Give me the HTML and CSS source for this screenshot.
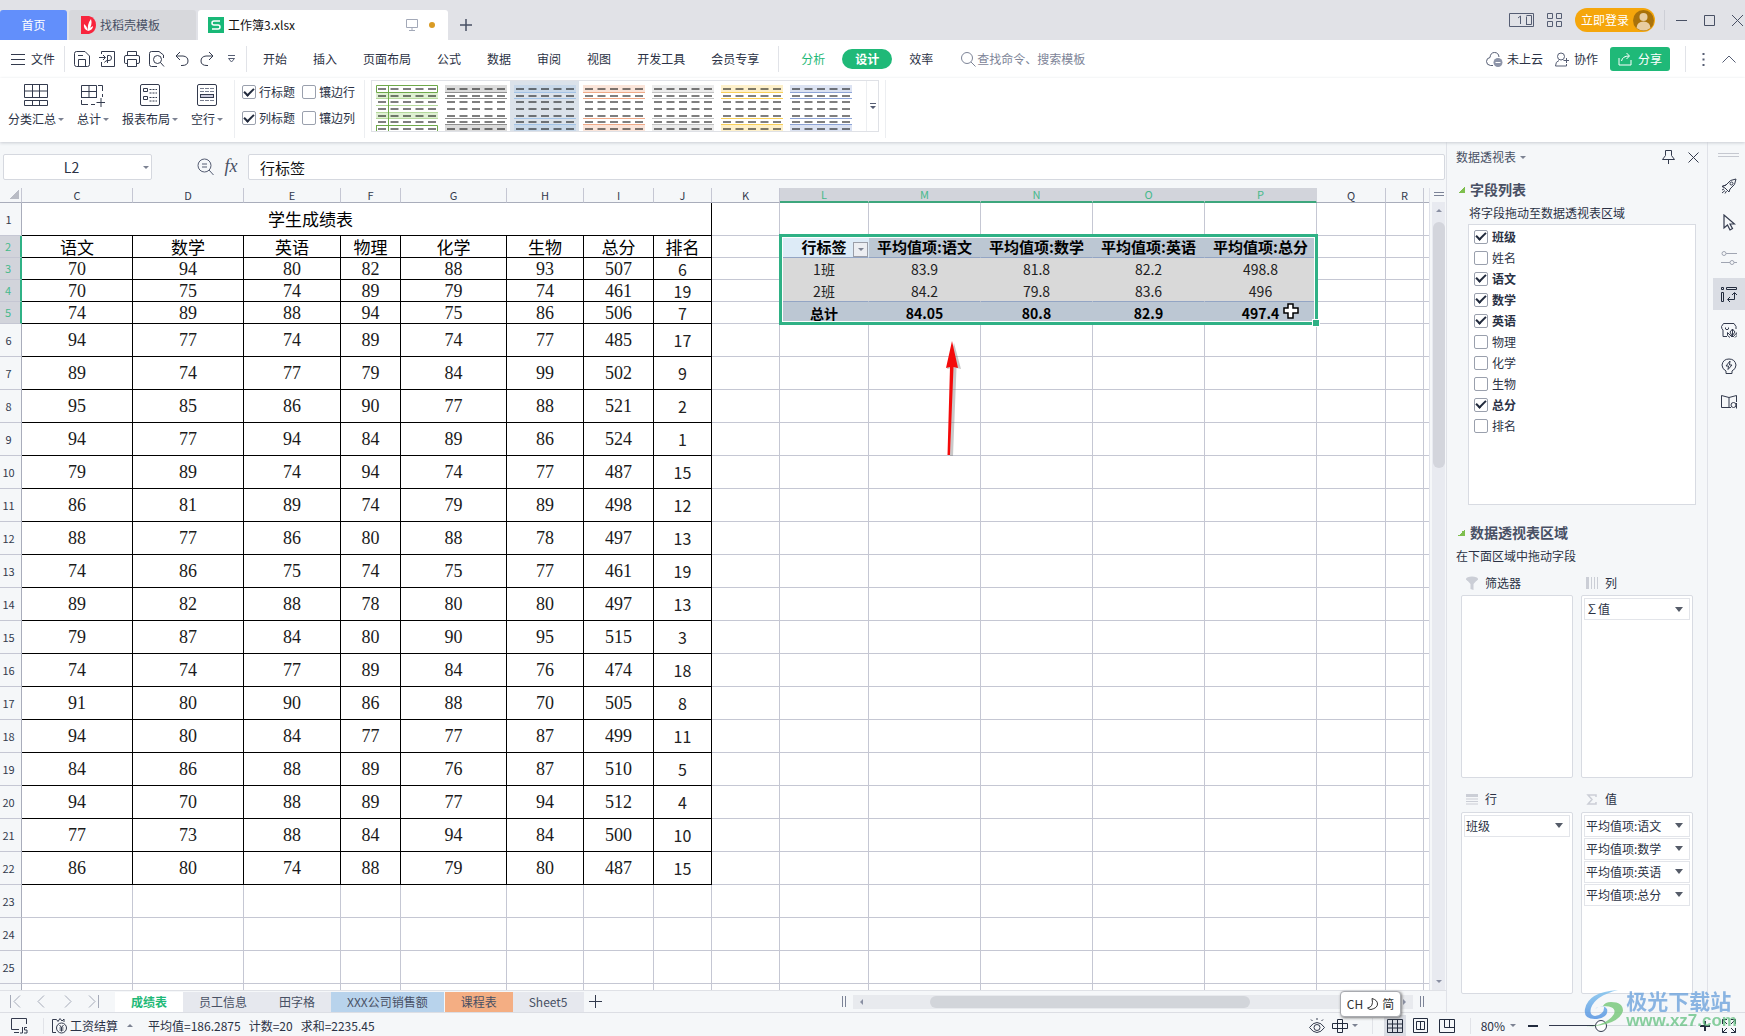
FILE: index.html
```html
<!DOCTYPE html>
<html lang="zh-CN">
<head>
<meta charset="utf-8">
<title>工作簿3.xlsx</title>
<link rel="stylesheet" href="styles.css">
</head>
<body>
<svg class="defs" aria-hidden="true">
  <symbol id="dashes" viewBox="0 0 62 46">
    <path d="M2 4H61M2 11H61M2 17H61M2 24H61M2 31H61M2 37H61M2 44H61" stroke="#000" stroke-width="1.200" stroke-dasharray="8 4.500" fill="none"/>
  </symbol>
  <symbol id="rules" viewBox="0 0 62 46">
    <path d="M0 7.500H62M0 13.500H62M0 33.500H62M0 39.500H62" fill="none" stroke="currentColor"/>
    <path d="M0 0H62V7H0zM0 40H62V46H0z" fill="currentColor" opacity=".32"/>
  </symbol>
</svg>

<header class="titlebar">
  <nav class="doc-tabs">
    <button class="doc-tab home">首页</button>
    <button class="doc-tab store"><svg width="15" height="18" viewBox="0 0 15 18"><path d="M0 0H8Q15 2 15 9T8 18H0z" fill="#f8253d"/><path d="M7 15Q2 13 3 8Q6 10 7 15Q6 8 10 3Q12 9 7 15Q9 11 12 10Q12 14 7 15" fill="#fff"/></svg>找稻壳模板</button>
    <button class="doc-tab current"><svg width="16" height="16" viewBox="0 0 16 16"><rect width="16" height="16" fill="#18b877"/><path d="M12 4H6Q4 4 4 6T6 8H10Q12 8 12 10T10 12H4" fill="none" stroke="#fff" stroke-width="1.500"/></svg><span class="doc-name">工作簿3.xlsx</span><svg width="12" height="12" viewBox="0 0 12 12" fill="none" stroke="#a3a9b8"><path d="M.5 .5H11.500V8.500H.5zM6 8.500V11M3 11.500H9"/></svg><i class="unsaved"></i></button>
    <button class="icon-btn new-tab" aria-label="新建"><svg width="12" height="12" viewBox="0 0 12 12" stroke="#485064" stroke-width="1.500"><path d="M6 0V12M0 6H12"/></svg></button>
  </nav>
  <div class="window-tools">
    <button class="icon-btn" aria-label="窗口"><svg width="25" height="14" viewBox="0 0 25 14" fill="none" stroke="#555d73"><path d="M.5 .5H24.500V13.500H.5zM9 5L11.500 3V11M17.500 3.500V11M17 11.500H22.500V2.500H17.500"/></svg></button>
    <button class="icon-btn" aria-label="应用"><svg width="15" height="14" viewBox="0 0 15 14" fill="none" stroke="#555d73"><path d="M.5 .5H5.500V5.500H.5zM9.500 .5H14.500V5.500H9.500zM.5 8.500H5.500V13.500H.5zM9.500 8.500H14.500V13.500H9.500z"/></svg></button>
    <button class="login">立即登录<svg width="21" height="21" viewBox="0 0 21 21"><circle cx="10.500" cy="10.500" r="10.500" fill="#a9720b"/><circle cx="10.500" cy="7" r="4" fill="#e8cda2"/><path d="M3.500 18Q4 11.500 10.500 11.500T17.500 18Q10.500 23 3.500 18" fill="#e8cda2"/></svg></button>
    <i class="sep"></i>
    <button class="icon-btn win" aria-label="最小化"><svg width="11" height="11" viewBox="0 0 11 11" fill="none" stroke="#485064"><path d="M0 5.500H11"/></svg></button>
    <button class="icon-btn win" aria-label="最大化"><svg width="11" height="11" viewBox="0 0 11 11" fill="none" stroke="#485064"><path d="M.5 .5H10.500V10.500H.5z"/></svg></button>
    <button class="icon-btn win" aria-label="关闭"><svg width="11" height="11" viewBox="0 0 11 11" fill="none" stroke="#485064"><path d="M0 0L11 11M11 0L0 11"/></svg></button>
  </div>
</header>

<div class="menubar">
  <button class="file-menu"><svg width="14" height="11" viewBox="0 0 14 11" stroke="#333a4d"><path d="M0 .5H14M0 5.500H14M0 10.500H14"/></svg>文件</button>
  <i class="sep"></i>
  <div class="quick">
    <button class="icon-btn" aria-label="保存"><svg width="16" height="16" viewBox="0 0 16 16" fill="none" stroke="#333a4d"><path d="M.5 2.500V13.500Q.5 15.500 2.500 15.500H13.500Q15.500 15.500 15.500 13.500V5L11 .5H2.500Q.5 .5 .5 2.500M4.500 15V8.500H11.500V15M4 4.500H9"/></svg></button>
    <button class="icon-btn" aria-label="输出为PDF"><svg width="16" height="16" viewBox="0 0 16 16" fill="none" stroke="#333a4d"><path d="M2.500 3V.5H15.500V15.500H2.500V11M0 6.500H6M4 4L6.500 6.500L4 9M8.500 12V4.500H10.500Q12.500 4.500 12.500 7T10 9.500H8.500Q6.500 9.500 5.500 11.500"/></svg></button>
    <button class="icon-btn" aria-label="打印"><svg width="16" height="16" viewBox="0 0 16 16" fill="none" stroke="#333a4d"><path d="M3.500 4V.5H12.500V4M3.500 12.500H1.500Q.5 12.500 .5 11V6Q.5 4.500 2 4.500H14Q15.500 4.500 15.500 6V11Q15.500 12.500 14 12.500H12.500M3.500 8.500H12.500V15.500H3.500z"/></svg></button>
    <button class="icon-btn" aria-label="打印预览"><svg width="16" height="16" viewBox="0 0 16 16" fill="none" stroke="#333a4d"><path d="M8 15.500H2.500Q.5 15.500 .5 13.500V2.500Q.5 .5 2.500 .5H10L14.500 4V7"/><circle cx="8.500" cy="8.500" r="4"/><path d="M11.500 11.500L15 15.500"/></svg></button>
    <button class="icon-btn" aria-label="撤销"><svg width="14" height="16" viewBox="0 0 14 16" fill="none" stroke="#333a4d"><path d="M5 1L1 5L5 9M1 5H8Q13 5.500 13 10T7 14.500H6"/></svg></button>
    <button class="icon-btn" aria-label="恢复"><svg width="14" height="16" viewBox="0 0 14 16" fill="none" stroke="#333a4d"><path d="M9 1L13 5L9 9M13 5H6Q1 5.500 1 10T7 14.500H8"/></svg></button>
    <button class="icon-btn" aria-label="更多"><svg width="9" height="8" viewBox="0 0 9 8" fill="none" stroke="#555d73"><path d="M1 .5H8M1.500 3.500H7.500L4.500 7z"/></svg></button>
  </div>
  <i class="sep"></i>
  <nav class="menu">
    <button>开始</button><button>插入</button><button>页面布局</button><button>公式</button><button>数据</button><button>审阅</button><button>视图</button><button>开发工具</button><button>会员专享</button>
  </nav>
  <i class="sep"></i>
  <nav class="context-menu">
    <button class="analysis">分析</button><button class="design">设计</button><button>效率</button>
  </nav>
  <label class="search"><svg width="15" height="15" viewBox="0 0 15 15" fill="none" stroke="#7d8497"><circle cx="6" cy="6" r="5.500"/><path d="M10 10L14.500 14.500"/></svg><input type="text" placeholder="查找命令、搜索模板" aria-label="查找命令"></label>
  <div class="share-tools">
    <button class="cloud"><svg width="17" height="16" viewBox="0 0 17 16" fill="none" stroke="#555d73"><path d="M7 14.500H4.500Q.5 14 .5 10.500T4 6.500Q4.500 1.500 8.500 1.500T13 6"/><circle cx="12" cy="11.500" r="4.500" fill="#8d94a8" stroke="none"/><path d="M9.500 11.500H14.500" stroke="#fff"/></svg>未上云</button>
    <button class="collab"><svg width="14" height="15" viewBox="0 0 14 15" fill="none" stroke="#555d73"><circle cx="6" cy="4.500" r="3.500"/><path d="M4 8.500Q.5 9.500 .5 14H11.500V12M8.500 8.500H14M11.500 6V11"/></svg>协作</button>
    <button class="share"><svg width="14" height="14" viewBox="0 0 14 14" fill="none" stroke="#fff"><path d="M1 6V13H13V8M3.500 9Q4.500 4 11 4M8.500 1L11.500 4L8.500 7"/></svg>分享</button>
    <i class="sep"></i>
    <button class="icon-btn" aria-label="更多"><svg width="3" height="13" viewBox="0 0 3 13" fill="#555d73"><path d="M.5 0H2.500V2H.5zM.5 5.500H2.500V7.500H.5zM.5 11H2.500V13H.5z"/></svg></button>
    <button class="icon-btn" aria-label="收起"><svg width="14" height="8" viewBox="0 0 14 8" fill="none" stroke="#555d73"><path d="M.5 7.500L7 1L13.500 7.500"/></svg></button>
  </div>
</div>

<section class="ribbon">
  <div class="commands">
    <button class="command"><svg width="24" height="22" viewBox="0 0 24 22" fill="none" stroke="#333a4d"><path d="M.5 .5H23.500V13.500H.5zM8.500 .5V13.500M15.500 .5V13.500M.5 7H23.500M.5 16.500H23.500V21.500H.5zM8.500 16.500V21.500M15.500 16.500V21.500"/></svg><span>分类汇总<i class="caret"></i></span></button>
    <button class="command"><svg width="24" height="23" viewBox="0 0 24 23" fill="none" stroke="#333a4d"><path d="M.5 14V1.500H15.500V14M8 1.500V14M.5 7.500H16M.5 13.500H15M17 1.500H21.500V7M21.500 10V13M.5 16V20.500H7M10 20.500H14M20 14V23M15.500 18.500H24"/></svg><span>总计<i class="caret"></i></span></button>
    <button class="command"><svg width="20" height="22" viewBox="0 0 20 22" fill="none" stroke="#333a4d"><rect x=".5" y=".5" width="19" height="21" rx="1.500"/><path d="M3.500 4.500H7.500V7.500H3.500zM3.500 12.500H7.500V15.500H3.500z"/><path d="M9.500 5.500H17M9.500 9H17M9.500 13.500H17M9.500 17H17" stroke-dasharray="2 1"/></svg><span>报表布局<i class="caret"></i></span></button>
    <button class="command"><svg width="20" height="22" viewBox="0 0 20 22" fill="none" stroke="#333a4d"><rect x=".5" y=".5" width="19" height="21" rx="1.500"/><rect x="3.500" y="10.500" width="13" height="3" fill="#ccd"/><path d="M3 4.500H17M3 7.500H17M3 16.500H17" stroke-dasharray="4 1" stroke="#777e8f"/></svg><span>空行<i class="caret"></i></span></button>
  </div>
  <i class="sep"></i>
  <div class="options">
    <label><input type="checkbox" checked>行标题</label>
    <label><input type="checkbox">镶边行</label>
    <label><input type="checkbox" checked>列标题</label>
    <label><input type="checkbox">镶边列</label>
  </div>
  <i class="sep"></i>
  <div class="gallery">
    <button aria-label="样式 1"><svg width="62" height="46" viewBox="0 0 62 46"><path d="M0 8H62V14H0zM0 28H62V34H0z" fill="#dff0d3"/><use href="#dashes"/><path d="M0 13.500H62M0 20.500H62M0 27.500H62M0 33.500H62" stroke="#b5d99c" fill="none"/><path d="M.5 .5H61.500V7.500H.5zM.5 40.500H61.500V46M.5 40V46M12.500 0V46" fill="none" stroke="#6fa94a"/></svg></button>
    <button class="gray" aria-label="样式 2"><svg width="62" height="46"><use href="#rules"/><use href="#dashes"/></svg></button>
    <button class="blue chosen" aria-label="样式 3"><svg width="62" height="46"><use href="#rules"/><use href="#dashes"/></svg></button>
    <button class="orange" aria-label="样式 4"><svg width="62" height="46"><use href="#rules"/><use href="#dashes"/></svg></button>
    <button class="silver" aria-label="样式 5"><svg width="62" height="46"><use href="#rules"/><use href="#dashes"/></svg></button>
    <button class="gold" aria-label="样式 6"><svg width="62" height="46"><use href="#rules"/><use href="#dashes"/></svg></button>
    <button class="navy" aria-label="样式 7"><svg width="62" height="46"><use href="#rules"/><use href="#dashes"/></svg></button>
    <button class="gallery-more" aria-label="更多样式"><svg width="6" height="6" viewBox="0 0 6 6" fill="#555d73"><path d="M0 0H6V1H0zM0 3H6L3 6z"/></svg></button>
  </div>
  <i class="sep"></i>
</section>

<div class="workspace">
  <main class="book">
    <div class="formula-bar">
      <label class="name-box"><input type="text" value="L2" aria-label="名称框"><i class="caret"></i></label>
      <button class="icon-btn" aria-label="查找"><svg width="17" height="18" viewBox="0 0 17 18" fill="none" stroke="#555d73"><circle cx="7.500" cy="7.500" r="6.500"/><path d="M12 12L16.500 17M5 6H10M5 9H10"/></svg></button>
      <button class="icon-btn fx" aria-label="插入函数">fx</button>
      <input class="formula" type="text" value="行标签" aria-label="编辑栏">
    </div>
    <div class="sheet-area">
      <div class="grid">
        <table class="sheet">
          <colgroup>
            <col class="w-head"><col class="w-cd"><col class="w-cd"><col class="w-e"><col class="w-f"><col class="w-g"><col class="w-h"><col class="w-i"><col class="w-j"><col class="w-k"><col class="w-l"><col class="w-pivot"><col class="w-pivot"><col class="w-pivot"><col class="w-pivot"><col class="w-q"><col class="w-r"><col class="w-s">
          </colgroup>
          <thead id="columns"></thead>
          <tbody id="cells"></tbody>
        </table>
        <div class="selection"></div>
        <button class="filter" aria-label="筛选"><i class="caret"></i></button>
        <svg class="cross" width="16" height="16" viewBox="0 0 16 16"><path d="M5 1H10V5H15V10H10V15H5V10H1V5H5z" fill="#fff" stroke="#000" stroke-width="1.500"/></svg>
        <svg class="arrow" width="24" height="120" viewBox="0 0 24 120"><path d="M11 2L18 28L13.500 27L10 115H7L9 27L4 28z" fill="#777" opacity=".4" transform="translate(2 1)"/><path d="M11 1L17 28L12.500 27L9 115H6.500L9 27L5 28z" fill="#f40a0a"/></svg>
      </div>
      <div class="vscroll"><svg width="10" height="4" viewBox="0 0 10 4" stroke="#7c8397"><path d="M0 .5H10M0 3.500H10"/></svg><div class="track"><i class="up"></i><div class="thumb"></div><i class="down"></i></div></div>
    </div>
    <div class="tabbar">
      <div class="tab-nav">
        <button class="icon-btn" aria-label="第一张"><svg width="11" height="13" viewBox="0 0 11 13" fill="none" stroke="#a5aab8"><path d="M.5 0V13M10 .5L4 6.500L10 12.500"/></svg></button>
        <button class="icon-btn" aria-label="上一张"><svg width="11" height="13" viewBox="0 0 11 13" fill="none" stroke="#a5aab8"><path d="M8 .5L2 6.500L8 12.500"/></svg></button>
        <button class="icon-btn" aria-label="下一张"><svg width="11" height="13" viewBox="0 0 11 13" fill="none" stroke="#a5aab8"><path d="M3 .5L9 6.500L3 12.500"/></svg></button>
        <button class="icon-btn" aria-label="最后一张"><svg width="11" height="13" viewBox="0 0 11 13" fill="none" stroke="#a5aab8"><path d="M10.500 0V13M1 .5L7 6.500L1 12.500"/></svg></button>
      </div>
      <button class="sheet-tab active">成绩表</button><button class="sheet-tab">员工信息</button><button class="sheet-tab">田字格</button><button class="sheet-tab tab-blue">XXX公司销售额</button><button class="sheet-tab tab-orange">课程表</button><button class="sheet-tab">Sheet5</button>
      <button class="icon-btn add-sheet" aria-label="新建工作表"><svg width="13" height="13" viewBox="0 0 13 13" stroke="#333a4d"><path d="M6.500 0V13M0 6.500H13"/></svg></button>
      <div class="hscroll"><i class="bars"></i><div class="track"><i class="left"></i><div class="thumb"></div><i class="right"></i></div><i class="bars"></i></div>
      <div class="ime">CH<svg width="11" height="12" viewBox="0 0 11 12" fill="none" stroke="#333"><path d="M5 .5Q10.500 2 10.500 6T4 11.500Q2 11.500 .5 10Q7 9 5 .5z"/></svg>简</div>
    </div>
  </main>

  <aside class="panel">
    <div class="panel-title"><button>数据透视表<i class="caret"></i></button>
      <span class="panel-actions"><button class="icon-btn" aria-label="固定"><svg width="13" height="14" viewBox="0 0 13 14" fill="none" stroke="#333a4d"><path d="M3.500 .5H9.500V5.500L12.500 9.500H.5L3.500 5.500zM6.500 9.500V14"/></svg></button><button class="icon-btn" aria-label="关闭"><svg width="11" height="11" viewBox="0 0 11 11" fill="none" stroke="#333a4d"><path d="M.5 .5L10.500 10.500M10.500 .5L.5 10.500"/></svg></button></span>
    </div>
    <h2>字段列表</h2>
    <p class="hint indent">将字段拖动至数据透视表区域</p>
    <div class="fields">
      <label class="used"><input type="checkbox" checked>班级</label>
      <label><input type="checkbox">姓名</label>
      <label class="used"><input type="checkbox" checked>语文</label>
      <label class="used"><input type="checkbox" checked>数学</label>
      <label class="used"><input type="checkbox" checked>英语</label>
      <label><input type="checkbox">物理</label>
      <label><input type="checkbox">化学</label>
      <label><input type="checkbox">生物</label>
      <label class="used"><input type="checkbox" checked>总分</label>
      <label><input type="checkbox">排名</label>
    </div>
    <h2>数据透视表区域</h2>
    <p class="hint">在下面区域中拖动字段</p>
    <div class="areas">
      <section class="area"><h3><svg width="12" height="14" viewBox="0 0 12 14" fill="#cbced6"><ellipse cx="6" cy="3" rx="6" ry="2.500"/><path d="M0 3L4.500 8V13L7.500 14V8L12 3z"/></svg>筛选器</h3><div class="drop"></div></section>
      <section class="area"><h3><svg width="12" height="12" viewBox="0 0 12 12" fill="#cbced6"><path d="M0 0H3V12H0zM5 0H6V12H5zM8 0H9V12H8zM11 0H12V12H11z"/></svg>列</h3><div class="drop"><button>∑值<i class="caret"></i></button></div></section>
      <section class="area"><h3><svg width="12" height="11" viewBox="0 0 12 11" fill="#cbced6"><path d="M0 0H12V3H0zM0 4.500H12V5.500H0zM0 7H12V8H0zM0 9.500H12V10.500H0z"/></svg>行</h3><div class="drop"><button>班级<i class="caret"></i></button></div></section>
      <section class="area"><h3><svg width="12" height="11" viewBox="0 0 12 11" fill="none" stroke="#cbced6" stroke-width="1.500"><path d="M10 3V1H2L6 5.500L2 10H10V8"/></svg>值</h3><div class="drop"><button>平均值项:语文<i class="caret"></i></button><button>平均值项:数学<i class="caret"></i></button><button>平均值项:英语<i class="caret"></i></button><button>平均值项:总分<i class="caret"></i></button></div></section>
    </div>
  </aside>

  <nav class="rail">
    <i class="grip"></i>
    <button aria-label="工具箱"><svg width="16" height="16" viewBox="0 0 16 16" fill="none" stroke="#333a4d"><path d="M5 7Q9 1 15 1Q15 7 9 11L8 14L6 12L4 10L1 8.500zM5 7L1 8.500M1 12L3 11M1 15L4 12.500M4 15.500L5.500 13"/><circle cx="10.500" cy="5.500" r="1.500"/></svg></button>
    <button aria-label="选择"><svg width="14" height="17" viewBox="0 0 14 17" fill="none" stroke="#333a4d" stroke-width="1.200"><path d="M2 1V14L5.500 11L8 16L10.500 14.500L8 10H12.500z"/></svg></button>
    <button aria-label="属性"><svg width="16" height="14" viewBox="0 0 16 14" fill="none" stroke="#a0a5b2"><circle cx="3" cy="2.500" r="2"/><path d="M5 2.500H16M0 11.500H9M13 11.500H16"/><circle cx="11" cy="11.500" r="2"/></svg></button>
    <button class="active" aria-label="分析"><svg width="16" height="15" viewBox="0 0 16 15" fill="none" stroke="#222b3d"><path d="M.5 .5H2.500V2.500H.5zM.5 5.500H2.500V14.500H.5zM5.500 .5H15.500V2.500H5.500zM13.500 6V12.500H7M11 8L13.500 5.500L16 8M9 10L6.500 12.500L9 15"/></svg></button>
    <button aria-label="形状"><svg width="16" height="16" viewBox="0 0 16 16" fill="none" stroke="#333a4d"><path d="M6 14.500H2V8Q.5 7 .5 4.500L2.500 1.500H13L15 4.500V7M4.500 5.500V7Q6 8.500 7.500 7V5.500"/><path d="M11.500 7V15M11 15L6.500 10.500V13.500L9 15.500M12 15L16 10.500V13.500L14 15.500M11 14L9 10L11.500 7L14 10z"/></svg></button>
    <button aria-label="建议"><svg width="16" height="16" viewBox="0 0 16 16" fill="none" stroke="#333a4d"><path d="M5 13Q1 11 1 7Q2 1 8 1T15 7Q15 11 11 13V15.500H5zM9 3L5 8H7.500L7 11.500L11 7H8.500z"/></svg></button>
    <button aria-label="帮助"><svg width="16" height="14" viewBox="0 0 16 14" fill="none" stroke="#333a4d"><path d="M8 2.500L.5 .5V12.500H8V2.500L15.500 .5V7M8 12.500H10"/><circle cx="12.500" cy="10" r="2.500"/><path d="M15.500 8V13.500"/></svg></button>
  </nav>
</div>

<footer class="status">
  <button class="icon-btn" aria-label="宏"><svg width="17" height="16" viewBox="0 0 17 16" fill="none" stroke="#333a4d"><path d="M8 11.500H.5V.5H15.500V6M3 14.500H8M11.500 9V15H9M16 9.500H13.500V12H16V15H13"/></svg></button>
  <i class="sep"></i>
  <button class="salary"><svg width="15" height="16" viewBox="0 0 15 16" fill="none" stroke="#333a4d"><path d="M4 14.500H.5V1.500H4.500L6 3.500L8 .5L10 3L12 1V4"/><circle cx="9.500" cy="10" r="5"/><path d="M7.500 7L9.500 9.500L11.500 7M9.500 9.500V13.500M7.500 10H11.500M7.500 12H11.500"/></svg>工资结算<i class="caret-up"></i></button>
  <output class="stats"><span>平均值=186.2875</span><span>计数=20</span><span>求和=2235.45</span></output>
  <div class="view-tools">
    <button class="icon-btn" aria-label="护眼"><svg width="16" height="15" viewBox="0 0 16 15" fill="none" stroke="#333a4d"><path d="M.5 9.500Q4 4.500 8 4.500T15.500 9.500Q12 14.500 8 14.500T.5 9.500M8 0V2M2 1.500L3.500 3M14 1.500L12.500 3"/><circle cx="8" cy="9.500" r="3"/></svg></button>
    <button class="icon-btn reading" aria-label="阅读模式"><svg width="16" height="14" viewBox="0 0 16 14" fill="none" stroke="#222b3d"><path d="M5.500 .5H10.500V13.500H5.500zM.5 4.500H15.500V9.500H.5z"/></svg><i class="caret"></i></button>
    <i class="sep"></i>
    <button class="icon-btn view on" aria-label="普通视图"><svg width="16" height="14" viewBox="0 0 16 14" fill="none" stroke="#222b3d"><path d="M.5 .5H15.500V13.500H.5zM5.500 .5V13.500M10.500 .5V13.500M.5 5H15.500M.5 9H15.500"/></svg></button>
    <button class="icon-btn view" aria-label="分页预览"><svg width="15" height="15" viewBox="0 0 15 15" fill="none" stroke="#222b3d"><path d="M.5 .5H14.500V14.500H.5zM3.500 3.500H11.500V11.500H3.500zM7.500 3.500V11.500"/></svg></button>
    <button class="icon-btn view" aria-label="页面布局"><svg width="16" height="14" viewBox="0 0 16 14" fill="none" stroke="#222b3d"><path d="M.5 .5H15.500V13.500H.5zM5.500 .5V8.500H15.500M10.500 .5V8.500"/></svg></button>
    <i class="sep"></i>
    <button class="zoom">80%<i class="caret"></i></button>
    <button class="icon-btn" aria-label="缩小"><svg width="10" height="10" viewBox="0 0 10 10" stroke="#222b3d" stroke-width="2"><path d="M0 5H10"/></svg></button>
    <input class="zoom-slider" type="range" min="0" max="100" value="34" aria-label="缩放">
    <button class="icon-btn" aria-label="放大"><svg width="10" height="10" viewBox="0 0 10 10" stroke="#222b3d" stroke-width="2"><path d="M0 5H10M5 0V10"/></svg></button>
    <button class="icon-btn full" aria-label="全屏"><svg width="14" height="14" viewBox="0 0 14 14" fill="none" stroke="#222b3d"><path d="M5 .5H.5V5M.5 .5L5 5M9 .5H13.500V5M13.500 .5L9 5M.5 9V13.500H5M.5 13.500L5 9M13.500 9V13.500H9M13.500 13.500L9 9"/></svg></button>
  </div>
</footer>

<div class="brand">
  <svg width="42" height="40" viewBox="0 0 42 40"><defs><linearGradient id="sky" x2="0" y2="1"><stop offset="0" stop-color="#7dc2ee"/><stop offset="1" stop-color="#4b8ce0"/></linearGradient></defs><path d="M35 1Q5 3 2 20Q0 31 14 30Q26 28 24 20Q20 14 12 20Q15 17 21 17Q22 25 12 27Q6 26 8 19Q12 7 35 1z" fill="url(#sky)"/><path d="M28 13Q40 13 40 22Q36 36 3 38Q24 36 31 25Q34 17 20 17Q22 13 28 13z" fill="#74c676"/></svg>
  <div><b>极光下载站</b><span>www.xz7.com</span></div>
</div>
<script src="script.js"></script>
</body>
</html>
```
FILE: styles.css
```css
* { box-sizing: border-box; }
body {
  margin: 0;
  height: 100vh;
  display: flex;
  flex-direction: column;
  overflow: hidden;
  background: #f5f7f9;
  color: #2b3245;
  font: 12px/16px "Noto Sans CJK SC", sans-serif;
}
button, input { font: inherit; color: inherit; }
button {
  display: flex;
  align-items: center;
  padding: 0;
  border: 0;
  background: none;
  white-space: nowrap;
}
svg { display: block; flex: none; }
h2, h3, p { margin: 0; }
.defs { position: absolute; width: 0; height: 0; }
.icon-btn { justify-content: center; flex: none; }
.sep { flex: none; width: 1px; background: #e1e3e8; }
.caret {
  flex: none;
  border: 3px solid transparent;
  border-top-color: #7c8292;
  border-bottom: 0;
}
.caret-up {
  border: 3px solid transparent;
  border-bottom-color: #7c8292;
  border-top: 0;
}
input[type="checkbox"] {
  appearance: none;
  flex: none;
  display: grid;
  place-items: center;
  width: 14px;
  height: 14px;
  margin: 0;
  border: 1px solid #9aa0ad;
  border-radius: 2px;
  background: #fff;
}
input[type="checkbox"]:checked::before {
  content: "";
  width: 8px;
  height: 4px;
  margin-bottom: 3px;
  border: solid #222b3d;
  border-width: 0 0 2px 2px;
  transform: rotate(-45deg);
}

/* Title bar */
.titlebar {
  flex: none;
  display: flex;
  justify-content: space-between;
  height: 40px;
  background: #e1e2e7;
}
.doc-tabs { display: flex; align-items: flex-end; gap: 2px; }
.doc-tab { height: 30px; border-radius: 3px 3px 0 0; }
.home { width: 67px; justify-content: center; background: #628ffb; color: #fff; }
.store { width: 127px; gap: 4px; padding-left: 12px; background: #d7d8dc; color: #485064; }
.current { width: 250px; gap: 4px; padding: 0 13px 0 10px; background: #fff; color: #111; }
.doc-name { flex: 1; text-align: left; }
.unsaved { width: 6px; height: 6px; margin-left: 7px; border-radius: 50%; background: #d99b24; }
.new-tab { width: 32px; height: 30px; }
.window-tools { display: flex; align-items: center; gap: 13px; }
.login {
  height: 24px;
  gap: 4px;
  padding: 0 1px 0 6px;
  border-radius: 12px;
  background: #f5a60b;
  color: #fff;
}
.window-tools .sep { height: 20px; margin: 0 -4px; background: #cdcfd6; }
.window-tools .win { width: 15px; }

/* Menu */
.menubar {
  flex: none;
  display: flex;
  align-items: center;
  height: 38px;
  background: #fff;
}
.menubar .sep { height: 26px; }
.file-menu { gap: 6px; padding: 0 9px 0 11px; }
.quick { display: flex; padding: 0 2px 0 4px; }
.quick .icon-btn { width: 25px; height: 24px; }
.menu { display: flex; gap: 26px; padding: 0 19px 0 16px; }
.context-menu { display: flex; align-items: center; gap: 17px; padding-left: 22px; }
.analysis { color: #1fb978; }
.design {
  height: 20px;
  padding: 0 13px;
  border-radius: 10px;
  background: #1fb978;
  color: #fff;
  font-weight: bold;
}
.search { display: flex; align-items: center; gap: 1px; flex: 1; min-width: 0; padding-left: 28px; }
.search input { flex: 1; min-width: 0; padding: 0; border: 0; outline: 0; background: none; }
.search input::placeholder { color: #7d8497; opacity: 1; }
.share-tools { display: flex; align-items: center; padding-right: 9px; }
.cloud { gap: 4px; }
.collab { gap: 5px; margin: 0 12px; }
.share {
  height: 24px;
  gap: 6px;
  width: 60px;
  justify-content: center;
  border-radius: 3px;
  background: #1fb978;
  color: #fff;
}
.share-tools .sep { margin: 0 16px 0 15px; }
.share-tools .icon-btn + .icon-btn { margin-left: 17px; }

/* Ribbon */
.ribbon {
  flex: none;
  position: relative;
  display: flex;
  align-items: flex-start;
  height: 64px;
  padding-top: 2px;
  background: #fff;
  box-shadow: 0 1px 3px #c9ccd3;
}
.ribbon .sep { height: 58px; background: #eceef1; }
.commands { display: flex; gap: 13px; padding: 4px 11px 0 8px; }
.command { flex-direction: column; justify-content: space-between; height: 43px; }
.command span { display: flex; align-items: center; gap: 2px; }
.options {
  display: grid;
  grid-template-columns: auto auto;
  gap: 10px 7px;
  padding: 4px 9px 0 7px;
}
.options label { display: flex; align-items: center; gap: 3px; }
.gallery {
  display: flex;
  width: 508px;
  height: 52px;
  margin: 0 6px;
  border: 1px solid #dfe1e6;
  overflow: hidden;
}
.gallery button { width: 69px; flex: none; justify-content: center; padding-top: 4px; align-items: flex-start; }
.gallery .gallery-more { width: 12px; margin-left: auto; padding: 0; align-items: center; border-left: 1px solid #eceef1; }
.gallery .chosen { background: #dbe2ea; }
.gray { color: #909090; }
.blue { color: #a3c3e6; }
.orange { color: #f0aa88; }
.silver { color: #c4c4c4; }
.gold { color: #f8d05a; }
.navy { color: #8ea4d6; }

/* Workbook */
.workspace { flex: 1; display: flex; min-height: 0; }
.book { flex: 1; min-width: 0; display: flex; flex-direction: column; }
.formula-bar {
  flex: none;
  display: flex;
  align-items: center;
  height: 46px;
  padding: 4px 1px 0 3px;
}
.name-box {
  display: flex;
  align-items: center;
  width: 149px;
  height: 26px;
  margin-right: 45px;
  padding-right: 2px;
  border: 1px solid #d5d8df;
  border-radius: 2px;
  background: #fff;
}
.name-box input { flex: 1; min-width: 0; border: 0; padding: 0 4px 0 0; background: none; text-align: center; font-size: 14px; }
.fx { width: 34px; padding-bottom: 2px; font: italic 18px/20px "Liberation Serif", serif; color: #485064; }
.formula {
  flex: 1;
  min-width: 0;
  height: 26px;
  padding: 0 11px;
  border: 1px solid #d5d8df;
  border-radius: 2px;
  background: #fff;
  color: #111;
  font-size: 15px;
}
.sheet-area { flex: 1; display: flex; min-height: 0; }
.grid { position: relative; flex: 1; min-width: 0; overflow: hidden; background: #fff; border-right: 1px solid #e0e2ea; }
.sheet { width: 1480px; table-layout: fixed; border-collapse: separate; border-spacing: 0; color: #000; }
.w-head { width: 22px; }
.w-cd { width: 111px; }
.w-e { width: 97px; }
.w-f { width: 60px; }
.w-g { width: 106px; }
.w-h { width: 77px; }
.w-i { width: 70px; }
.w-j { width: 58px; }
.w-k { width: 68px; }
.w-l { width: 89px; }
.w-pivot { width: 112px; }
.w-q { width: 69px; }
.w-r { width: 38px; }
.sheet th, .sheet td {
  padding: 0;
  border: solid #c5c7d3;
  border-width: 0 1px 1px 0;
  text-align: center;
  white-space: nowrap;
}
.sheet th { background: #f5f7f9; color: #333a4d; font-weight: normal; font-size: 11px; line-height: 13px; }
.sheet thead th { height: 15px; border-bottom-color: #a9adbb; }
.sheet thead th.picked { background: #d2d4db; border-right-color: #d2d4db; border-bottom: 2px solid #3da67d; color: #46b98b; }
.sheet tbody th { border-right-color: #a9adbb; padding-right: 4px; }
.sheet tbody th.picked { background: #d2d4db; border-right: 2px solid #2fb185; color: #46b98b; }
.sheet .corner { background: linear-gradient(135deg, #f5f7f9 50%, #b9bcc5 50%) right 2px bottom 3px / 9px 9px no-repeat #f5f7f9; }
.sheet tr { height: 33px; }
.sheet thead tr { height: 15px; }
.sheet tr.low { height: 22px; }
.sheet td.score { border-color: #000; color: #1a1a1a; font: 18px/20px "Liberation Serif", serif; }
.sheet td.subject { border-color: #000; font-size: 17px; line-height: 20px; }
.sheet td.title { padding-right: 112px; }
.sheet td.rank { border-color: #000; color: #222; font-size: 16px; line-height: 20px; }
.sheet td.pivot { border-right-color: #d9d9d9; border-bottom-color: #d9d9d9; background: #d9d9d9; color: #222; font-size: 14px; line-height: 20px; }
.sheet td.pivot-head, .sheet td.pivot-total { background: #bcc7d3; border-right-color: #bcc7d3; color: #000; font-weight: bold; }
.sheet td.pivot-head { border-bottom-color: #93a5c4; font-size: 15px; }
.sheet td.pivot-above { border-bottom-color: #93a5c4; }
.sheet td.pivot-first { background: #ddebf7; border-right-color: #ddebf7; }
.selection {
  position: absolute;
  left: 779px;
  top: 46px;
  width: 539px;
  height: 91px;
  border: 3px solid #2fb185;
  box-shadow: inset 0 0 0 1px #fff;
}
.selection::after {
  content: "";
  position: absolute;
  right: -4px;
  bottom: -4px;
  width: 6px;
  height: 6px;
  background: #2fb185;
  box-shadow: 0 0 0 1px #fff;
}
.filter {
  position: absolute;
  left: 853px;
  top: 54px;
  width: 15px;
  height: 15px;
  justify-content: center;
  border: 1px solid #9a9ea8;
  background: #eceef2;
}
.cross { position: absolute; left: 1283px; top: 115px; }
.arrow { position: absolute; left: 941px; top: 152px; }
.vscroll { flex: none; width: 16px; padding: 4px 1px 0 2px; display: flex; flex-direction: column; align-items: center; }
.vscroll .track {
  flex: 1;
  width: 13px;
  margin-top: 6px;
  padding: 7px 0;
  display: flex;
  flex-direction: column;
  align-items: center;
  background: #e8eaf0;
}
.vscroll .thumb { width: 12px; height: 246px; margin: 10px 0 auto; border-radius: 6px; background: #d3d5dc; }
.up, .down, .left, .right { flex: none; border: 3px solid transparent; }
.up { border-bottom-color: #8a90a3; border-top: 0; }
.down { border-top-color: #8a90a3; border-bottom: 0; }
.left { border-right-color: #8a90a3; border-left: 0; }
.right { border-left-color: #8a90a3; border-right: 0; }

.tabbar {
  position: relative;
  flex: none;
  display: flex;
  align-items: center;
  height: 22px;
  border-top: 1px solid #dfe1e6;
}
.tab-nav { display: flex; width: 115px; gap: 15px; padding-left: 10px; }
.sheet-tab { height: 20px; padding: 0 16px; background: #e6e8ee; color: #485064; }
.sheet-tab.active { background: #fff; color: #1fb978; font-weight: bold; }
.sheet-tab.tab-blue { background: #b8d3ec; margin-right: 1px; }
.sheet-tab.tab-orange { background: #f4ae83; }
.add-sheet { width: 24px; }
.hscroll { flex: 1; min-width: 0; display: flex; align-items: center; padding: 0 22px 0 234px; gap: 7px; }
.bars { flex: none; width: 4px; height: 11px; border: solid #7c8397; border-width: 0 1px; }
.hscroll .track { flex: 1; display: flex; align-items: center; height: 14px; padding: 0 7px; background: #e8eaee; }
.hscroll .thumb { flex: none; width: 320px; height: 12px; margin: 0 auto 0 67px; border-radius: 6px; background: #d2d5da; }
.ime {
  position: absolute;
  right: 45px;
  top: 0;
  z-index: 2;
  display: flex;
  align-items: center;
  justify-content: center;
  gap: 4px;
  width: 61px;
  height: 26px;
  border: 1px solid #a9abb0;
  border-radius: 4px;
  background: #fff;
  box-shadow: 1px 1px 3px #777;
  color: #333;
}

/* Pivot panel */
.panel {
  flex: none;
  width: 261px;
  display: flex;
  flex-direction: column;
  padding: 7px 10px 18px 9px;
  border-left: 1px solid #e0e2e8;
}
.panel-title { display: flex; justify-content: space-between; height: 16px; color: #485064; }
.panel-title button { gap: 4px; }
.panel-actions { display: flex; gap: 13px; margin-right: -2px; }
.panel h2 {
  display: flex;
  align-items: center;
  gap: 5px;
  margin: 14px 0 3px 2px;
  color: #485064;
  font-size: 14px;
  line-height: 20px;
}
.panel h2::before { content: ""; width: 7px; height: 7px; background: linear-gradient(135deg, transparent 50%, #7ebf4e 50%); }
.hint { padding: 3px 0 2px; }
.indent { padding-left: 13px; }
.fields {
  flex: none;
  min-height: 281px;
  margin: 1px 1px 3px 12px;
  padding: 1px 5px;
  border: 1px solid #d8dbe2;
  background: #fff;
}
.fields label { display: flex; align-items: center; gap: 4px; height: 21px; }
.fields .used { font-weight: bold; }
.areas {
  flex: 1;
  display: grid;
  grid-template-columns: 1fr 1fr;
  grid-template-rows: 1fr 1fr;
  gap: 12px 8px;
  padding: 7px 4px 0 5px;
}
.area { display: flex; flex-direction: column; }
.area h3 { display: flex; align-items: center; gap: 7px; height: 22px; padding: 0 0 3px 5px; font-size: 12px; font-weight: normal; }
.drop { flex: 1; display: flex; flex-direction: column; gap: 1px; padding: 2px; border: 1px solid #d8dbe2; border-radius: 2px; background: #fff; }
.drop button { justify-content: space-between; height: 22px; padding: 0 6px 0 1px; border: 1px solid #e3e5ea; }
.drop .caret { border-width: 5px 4px 0; border-top-color: #555b68; }

/* Right rail */
.rail { flex: none; width: 38px; display: flex; flex-direction: column; gap: 4px; padding: 11px 0 0 5px; border-left: 1px solid #e0e2e8; }
.rail button { justify-content: center; height: 32px; }
.rail .active { background: #dadde4; }
.grip { height: 4px; margin: 0 6px 9px 5px; border: solid #c5c8d0; border-width: 1px 0; }

/* Status bar */
.status { flex: none; display: flex; align-items: center; height: 24px; padding: 2px 9px 0 11px; border-top: 1px solid #dcdee4; }
.status .sep { height: 16px; }
.status > .sep { margin: 0 8px 0 15px; }
.salary { gap: 3px; }
.salary .caret-up { margin-left: 6px; }
.stats { display: flex; gap: 8px; margin-left: 15px; }
.view-tools { display: flex; align-items: center; margin-left: auto; }
.reading { gap: 4px; margin: 0 14px 0 7px; }
.view { width: 22px; height: 22px; margin-right: 4px; }
.view-tools .sep + .view { margin-left: 11px; }
.view + .sep { margin: 0 10px 0 8px; }
.on { background: #dadde4; }
.zoom { gap: 5px; margin-right: 12px; }
.zoom-slider {
  appearance: none;
  width: 147px;
  height: 14px;
  margin: 0 4px 0 11px;
  background: linear-gradient(90deg, #333a4d 36%, #d5d8df 36%) center / 100% 1px no-repeat;
}
.zoom-slider::-webkit-slider-thumb {
  appearance: none;
  width: 12px;
  height: 12px;
  border: 1px solid #333a4d;
  border-radius: 50%;
  background: #fff;
}
.full { margin-left: 12px; }

/* Site mark, floats over the lower right corner */
.brand { position: fixed; right: 8px; bottom: 6px; display: flex; align-items: center; gap: 1px; opacity: .8; pointer-events: none; }
.brand div { display: flex; flex-direction: column; color: #6fa3dc; }
.brand b { font-size: 21px; line-height: 24px; }
.brand span { color: #6cc488; font: bold 17px/18px "Liberation Sans", sans-serif; }
```
FILE: script.js
```js
const columns = "CDEFGHIJKLMNOPQR".split("");
const subjects = ["语文", "数学", "英语", "物理", "化学", "生物", "总分", "排名"];
const scores = [
  [70, 94, 80, 82, 88, 93, 507, 6],
  [70, 75, 74, 89, 79, 74, 461, 19],
  [74, 89, 88, 94, 75, 86, 506, 7],
  [94, 77, 74, 89, 74, 77, 485, 17],
  [89, 74, 77, 79, 84, 99, 502, 9],
  [95, 85, 86, 90, 77, 88, 521, 2],
  [94, 77, 94, 84, 89, 86, 524, 1],
  [79, 89, 74, 94, 74, 77, 487, 15],
  [86, 81, 89, 74, 79, 89, 498, 12],
  [88, 77, 86, 80, 88, 78, 497, 13],
  [74, 86, 75, 74, 75, 77, 461, 19],
  [89, 82, 88, 78, 80, 80, 497, 13],
  [79, 87, 84, 80, 90, 95, 515, 3],
  [74, 74, 77, 89, 84, 76, 474, 18],
  [91, 80, 90, 86, 88, 70, 505, 8],
  [94, 80, 84, 77, 77, 87, 499, 11],
  [84, 86, 88, 89, 76, 87, 510, 5],
  [94, 70, 88, 89, 77, 94, 512, 4],
  [77, 73, 88, 84, 94, 84, 500, 10],
  [86, 80, 74, 88, 79, 80, 487, 15]
];
const pivot = [
  ["行标签", "平均值项:语文", "平均值项:数学", "平均值项:英语", "平均值项:总分"],
  ["1班", "83.9", "81.8", "82.2", "498.8"],
  ["2班", "84.2", "79.8", "83.6", "496"],
  ["总计", "84.05", "80.8", "82.9", "497.4"]
];
const pivotClass = ["pivot pivot-head", "pivot", "pivot pivot-above", "pivot pivot-total"];
const lastRow = 25;

const cell = (tag, text, cls) => {
  const el = document.createElement(tag);
  el.textContent = text;
  if (cls) el.className = cls;
  return el;
};

const head = document.createElement("tr");
head.append(cell("th", "", "corner"));
columns.forEach(c => head.append(cell("th", c, "LMNOP".includes(c) ? "picked" : "")));
head.append(cell("th", ""));
document.getElementById("columns").append(head);

// One unnumbered row follows the last, so the grid lines run to the edge.
const body = document.getElementById("cells");
for (let r = 1; r <= lastRow + 1; r++) {
  const tr = document.createElement("tr");
  const inPivot = r >= 2 && r <= 5;
  if (inPivot) tr.className = "low";
  tr.append(cell("th", r > lastRow ? "" : r, inPivot ? "picked" : ""));
  if (r === 1) {
    const title = cell("td", "学生成绩表", "subject title");
    title.colSpan = 8;
    tr.append(title);
  } else {
    const values = r === 2 ? subjects : scores[r - 3] || Array(8).fill("");
    const filled = r <= 22;
    values.forEach((v, i) => tr.append(cell("td", v, !filled ? "" : r === 2 ? "subject" : i === 7 ? "rank" : "score")));
  }
  tr.append(cell("td", ""));
  for (let i = 0; i < 5; i++) {
    const td = inPivot ? cell("td", pivot[r - 2][i], pivotClass[r - 2]) : cell("td", "");
    if (r === 2 && i === 0) td.classList.add("pivot-first");
    tr.append(td);
  }
  for (let i = 0; i < 3; i++) tr.append(cell("td", ""));
  body.append(tr);
}
```
